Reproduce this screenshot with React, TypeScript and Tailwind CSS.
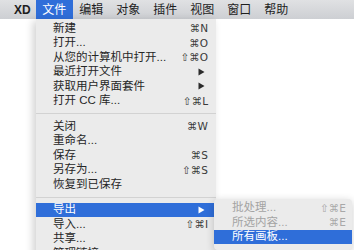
import React from "react";

const FONT = { fontFamily: '"Liberation Sans", "Noto Sans CJK SC", "DejaVu Sans", sans-serif' };

const Arrow = ({ white = false }: { white?: boolean }) => (
  <svg width="7" height="8" viewBox="0 0 7 8" className="mr-[3px] block">
    <path d="M0.5 0.5 L6.5 4 L0.5 7.5 Z" fill={white ? "#ffffff" : "#2b2b2b"} />
  </svg>
);

type Item = { label: string; sc?: string; arrow?: boolean; active?: boolean; disabled?: boolean };

const Row = ({ item, padL, padR }: { item: Item; padL: string; padR: string }) => (
  <div
    className={`flex h-[14.5px] items-center justify-between text-[11.5px] leading-none ${padL} ${padR} ${
      item.active ? "bg-[#2f6ed9] text-white" : item.disabled ? "text-[#a3a3a3]" : "text-[#262626]"
    }`}
  >
    <span className="whitespace-nowrap">{item.label}</span>
    {item.sc && (
      <span
        className={`whitespace-nowrap text-[10.5px] ${item.active ? "text-white" : item.disabled ? "text-[#a8a8a8]" : "text-[#3a3a3a]"}`}
        style={{ fontFamily: '"DejaVu Sans", "Liberation Sans", sans-serif' }}
      >
        {item.sc}
      </span>
    )}
    {item.arrow && <Arrow white={item.active} />}
  </div>
);

const Sep = () => (
  <div className="flex h-[11px] items-center">
    <div className="h-px w-full bg-[#d2d2d2]" />
  </div>
);

const group1: Item[] = [
  { label: "新建", sc: "⌘N" },
  { label: "打开...", sc: "⌘O" },
  { label: "从您的计算机中打开...", sc: "⇧⌘O" },
  { label: "最近打开文件", arrow: true },
  { label: "获取用户界面套件", arrow: true },
  { label: "打开 CC 库...", sc: "⇧⌘L" },
];
const group2: Item[] = [
  { label: "关闭", sc: "⌘W" },
  { label: "重命名..." },
  { label: "保存", sc: "⌘S" },
  { label: "另存为...", sc: "⇧⌘S" },
  { label: "恢复到已保存" },
];
const group3: Item[] = [
  { label: "导出", arrow: true, active: true },
  { label: "导入...", sc: "⇧⌘I" },
  { label: "共享..." },
  { label: "管理链接..." },
];
const sub: Item[] = [
  { label: "批处理...", sc: "⇧⌘E", disabled: true },
  { label: "所选内容...", sc: "⌘E", disabled: true },
  { label: "所有画板...", active: true },
];

export default function App() {
  const bar = ["编辑", "对象", "插件", "视图", "窗口", "帮助"];
  return (
    <div className="relative h-[250px] w-[354px] overflow-hidden bg-white" style={FONT}>
      <div className="flex h-[19px] items-stretch bg-gradient-to-b from-[#e0e1e3] to-[#cdcfd3] text-[12px] leading-none text-[#1e1e1e]">
        <div className="flex items-center pl-[14px] pr-[5px] font-bold">XD</div>
        <div className="flex items-center bg-[#2f6ed9] px-[6.5px] text-white">文件</div>
        {bar.map((b) => (
          <div key={b} className="flex items-center px-[6.5px]">
            {b}
          </div>
        ))}
      </div>

      <div className="absolute left-[36px] top-[19px] w-[180px] bg-[#ebebeb] pt-[2px] shadow-[-3px_2px_8px_rgba(0,0,0,0.18)]">
        {group1.map((it) => (
          <Row key={it.label} item={it} padL="pl-[17px]" padR="pr-[8px]" />
        ))}
        <Sep />
        {group2.map((it) => (
          <Row key={it.label} item={it} padL="pl-[17px]" padR="pr-[8px]" />
        ))}
        <Sep />
        {group3.map((it) => (
          <Row key={it.label} item={it} padL="pl-[17px]" padR="pr-[8px]" />
        ))}
      </div>

      <div className="absolute left-[214px] top-[199px] w-[138px] rounded-[4px] bg-[#ebebeb] pt-[1.5px] shadow-[0_2px_8px_rgba(0,0,0,0.2)]">
        {sub.map((it) => (
          <Row key={it.label} item={it} padL="pl-[18px]" padR="pr-[6px]" />
        ))}
        <div className="h-[6px]" />
      </div>
    </div>
  );
}
